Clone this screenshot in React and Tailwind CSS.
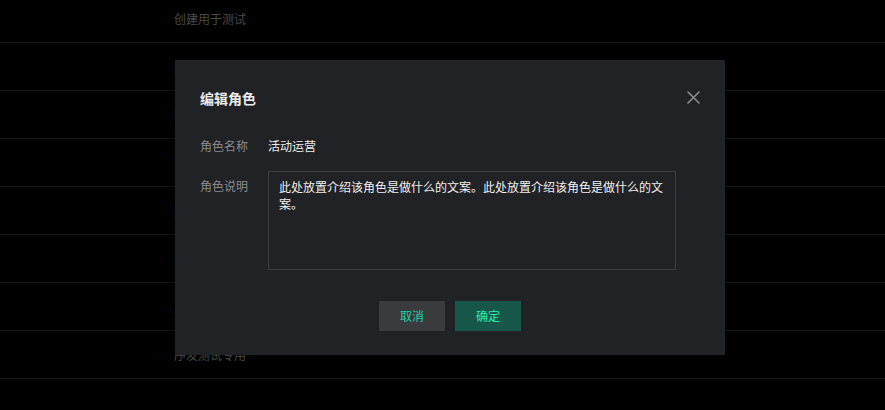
import React from 'react';

const rows = [
  '创建用于测试',
  '运营活动专用',
  '数据分析专用',
  '客服人员专用',
  '财务审核专用',
  '内容编辑专用',
  '产品管理专用',
  '序发测试专用',
  '',
];

const App = () => {
  return (
    <div
      className="relative w-[885px] h-[410px] overflow-hidden bg-black"
      style={{ fontFamily: '"Noto Sans CJK SC", "Noto Sans", sans-serif' }}
    >
      {/* table behind the mask */}
      <div className="-mt-[5px]">
        {rows.map((text, i) => (
          <div key={i} className="h-[48px] flex items-center border-b border-[#141414]">
            <span className="ml-[174px] text-[12px] text-[#4a4a4a]">{text}</span>
          </div>
        ))}
      </div>

      {/* modal */}
      <div className="absolute left-[175px] top-[60px] w-[550px] h-[295px] bg-[#212226] px-[25px]">
        <div className="h-[74px] flex items-center justify-between">
          <h2 className="text-[14px] leading-[20px] font-bold text-[#ececec] pt-[1px]">编辑角色</h2>
          <button className="w-[14px] h-[14px] flex items-center justify-center text-[#8c8c8c]">
            <svg width="13" height="13" viewBox="0 0 13 13" fill="none" stroke="currentColor" strokeWidth="1.6" strokeLinecap="round">
              <path d="M1 1L12 12M12 1L1 12" />
            </svg>
          </button>
        </div>

        <div className="flex items-center h-[22px] mt-[1px]">
          <span className="w-[68px] text-[12px] text-[#8a8b8e]">角色名称</span>
          <span className="text-[12px] text-[#ececec]">活动运营</span>
        </div>

        <div className="flex mt-[14px]">
          <span className="w-[68px] text-[12px] leading-[20px] text-[#8a8b8e] pt-[5px]">角色说明</span>
          <textarea
            className="w-[408px] h-[99px] resize-none border border-[#3d3e42] bg-transparent px-[10px] py-[6px] text-[12px] leading-[17px] text-[#f0f0f0] outline-none"
            defaultValue="此处放置介绍该角色是做什么的文案。此处放置介绍该角色是做什么的文案。"
          />
        </div>

        <div className="flex justify-center gap-[10px] mt-[31px]">
          <button className="w-[66px] h-[30px] bg-[#3a3b3f] text-[12px] text-[#1fd0a2]">取消</button>
          <button className="w-[66px] h-[30px] bg-[#16574a] text-[12px] text-[#2cebb6]">确定</button>
        </div>
      </div>
    </div>
  );
};

export default App;
